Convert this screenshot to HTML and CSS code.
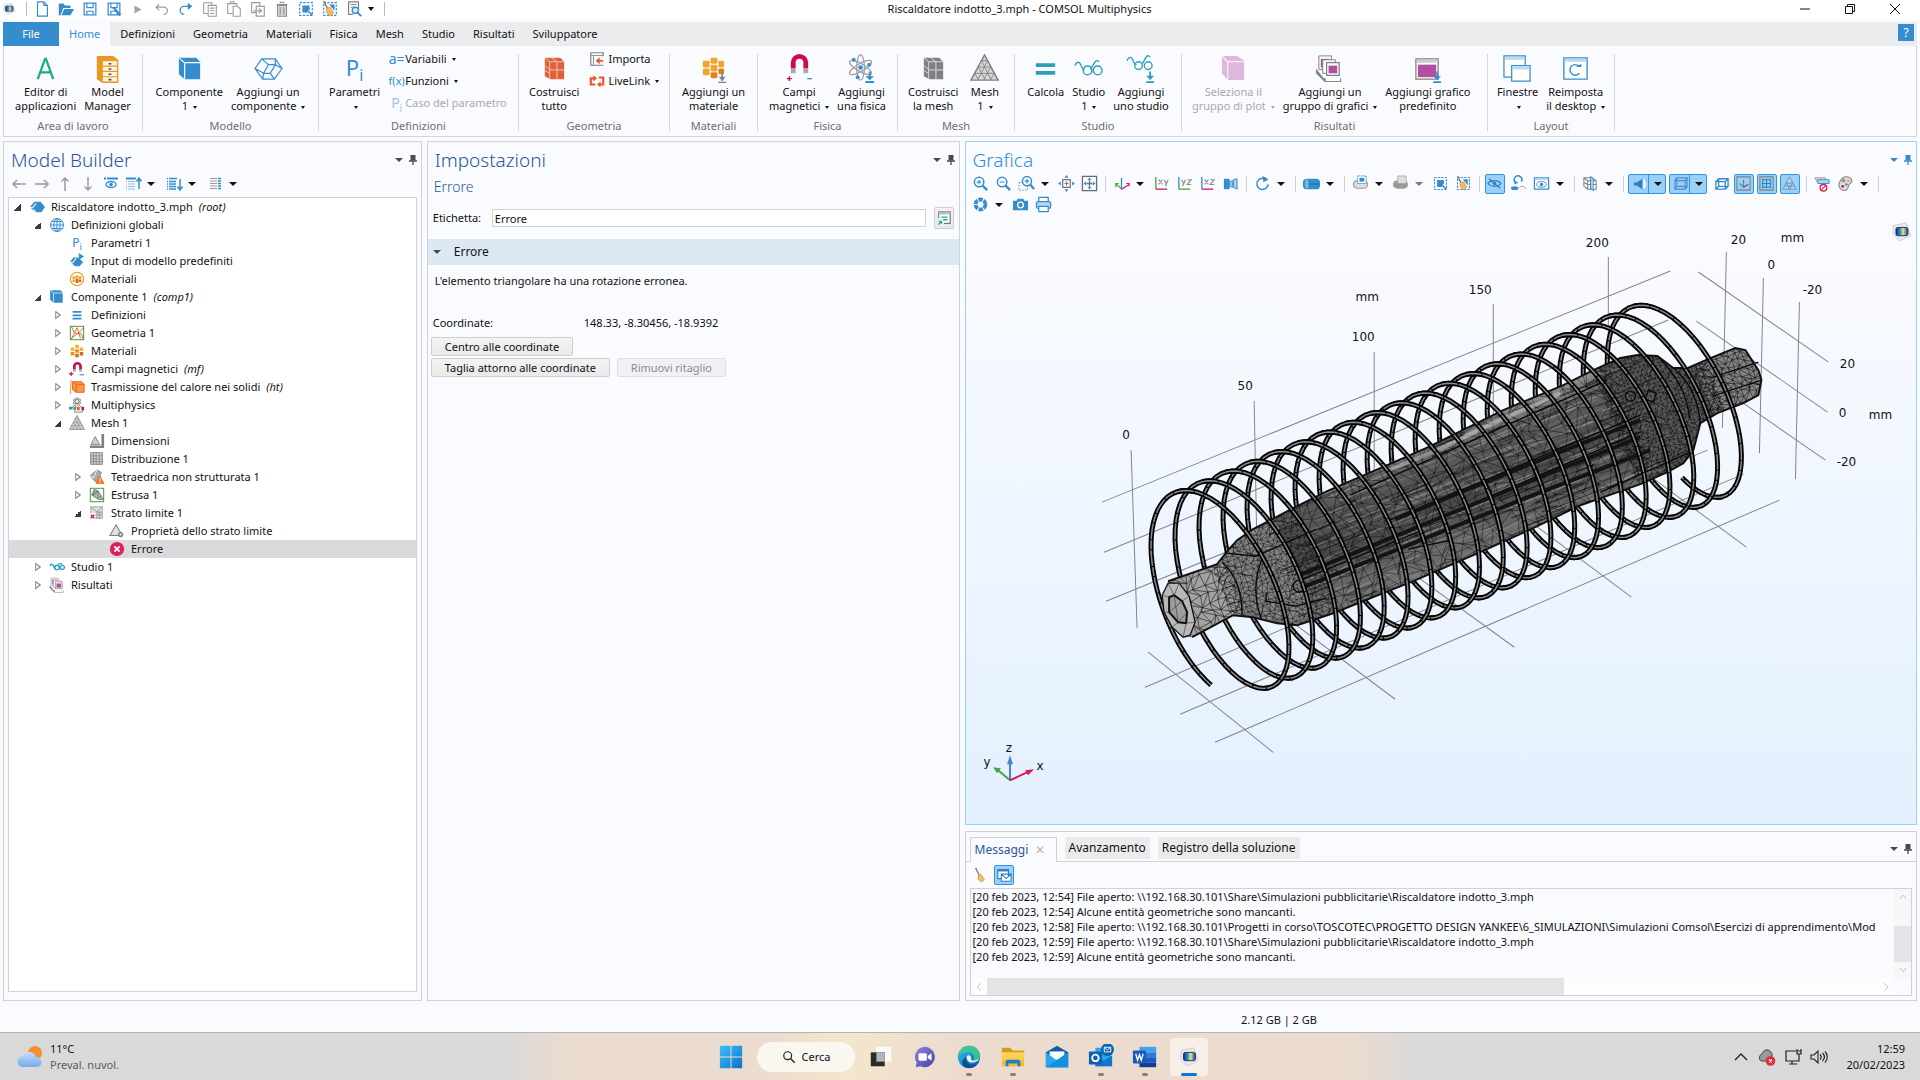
FILE: index.html
```html
<!DOCTYPE html>
<html lang="it">
<head>
<meta charset="utf-8">
<title>Riscaldatore indotto_3.mph - COMSOL Multiphysics</title>
<link rel="stylesheet" href="styles.css">
</head>
<body>
<svg class="defs" aria-hidden="true">
  <defs>
    <linearGradient id="gLogo" x1="0" x2="1"><stop offset="0" stop-color="#0d2f7d"/><stop offset=".35" stop-color="#2f8fd0"/><stop offset=".6" stop-color="#f3e46a"/><stop offset="1" stop-color="#0d3fa8"/></linearGradient>
    <linearGradient id="gEdge" x1="0" y1="0" x2="1" y2="1"><stop offset="0" stop-color="#35c1f1"/><stop offset=".5" stop-color="#1b8fd6"/><stop offset="1" stop-color="#0c59a4"/></linearGradient>
    <linearGradient id="gWin" x1="0" y1="0" x2="1" y2="1"><stop offset="0" stop-color="#3fc0f5"/><stop offset="1" stop-color="#0873cf"/></linearGradient>
    <linearGradient id="gCloud" x1="0" y1="0" x2="0" y2="1"><stop offset="0" stop-color="#c3dcfb"/><stop offset="1" stop-color="#7aa9ec"/></linearGradient>
    <linearGradient id="gChat" x1="0" y1="0" x2="1" y2="1"><stop offset="0" stop-color="#8d86e0"/><stop offset="1" stop-color="#4b3fa8"/></linearGradient>
    <linearGradient id="gFolder" x1="0" y1="0" x2="0" y2="1"><stop offset="0" stop-color="#ffd95e"/><stop offset="1" stop-color="#f5b52a"/></linearGradient>
  </defs>
  <symbol id="logo" viewBox="0 0 24 24"><path d="M3 5l14-3 5 14-12 6-7-7z" fill="#e9e9ec" stroke="#cfcfd4"/><rect x="6" y="7" width="13" height="9" rx="2" fill="url(#gLogo)" stroke="#0e2f80"/></symbol>
  <symbol id="new" viewBox="0 0 20 20"><path d="M5 2h7l4 4v12H5zM12 2v4h4" fill="#fff" stroke="#358dce" stroke-width="1.3"/></symbol>
  <symbol id="open" viewBox="0 0 20 20"><path d="M2 4h5l2 2h6v3H7l-3 8H2z" fill="#358dce"/><path d="M8 10h11l-4 7H5z" fill="#358dce"/></symbol>
  <symbol id="save" viewBox="0 0 20 20"><path d="M3.5 3.5h13v13h-13z" fill="none" stroke="#358dce" stroke-width="1.4"/><path d="M6.500 3.500v5h7v-5M6.500 16.500v-4h7v4" fill="none" stroke="#358dce" stroke-width="1.3"/></symbol>
  <symbol id="play" viewBox="0 0 20 20"><path d="M6 6l8 4.500-8 4.500z" fill="#a5a5a8"/></symbol>
  <symbol id="undo" viewBox="0 0 20 20"><path d="M4 8h8a4 4 0 0 1 0 8M7 4.500L3.500 8 7 11.500" fill="none" stroke="#9b9b9e" stroke-width="1.300"/></symbol>
  <symbol id="redo" viewBox="0 0 20 20"><path d="M15 7H8a4 4 0 0 0 0 9" fill="none" stroke="#358dce" stroke-width="1.400"/><path d="M12 3l5 4-5 4z" fill="#358dce"/></symbol>
  <symbol id="copy" viewBox="0 0 20 20"><path d="M8 15H3V3h9v3M8 6h9v12H8zM10 9h5M10 12h5M10 15h5" fill="none" stroke="#9b9b9e" stroke-width="1.200"/></symbol>
  <symbol id="paste" viewBox="0 0 20 20"><path d="M8 15H3V4h10v3M6 4V2h4v2M9 7h5l3 3v8H9z" fill="none" stroke="#9b9b9e" stroke-width="1.200"/></symbol>
  <symbol id="dup" viewBox="0 0 20 20"><path d="M8 14H3V3h9v4M8 7h9v11H8zM5 12h9M11 9.500l3 2.500-3 2.500" fill="none" stroke="#9b9b9e" stroke-width="1.300"/></symbol>
  <symbol id="trash" viewBox="0 0 20 20"><path d="M5 6h10v12H5z" fill="#d5d5d8"/><path d="M4 5h12M8 4V2.500h4V4M5 6h10v12H5zM8 8v8M12 8v8" fill="none" stroke="#8f8f92" stroke-width="1.200"/></symbol>
  <symbol id="select" viewBox="0 0 20 20"><rect x="3" y="3" width="14" height="14" fill="none" stroke="#358dce" stroke-width="1.300" stroke-dasharray="2.500 1.500"/><path d="M6 6h8v5l-3-1 1 4H6z" fill="#358dce"/><path d="M10 10l7 7M10 10v4M10 10h4" stroke="#358dce" stroke-width="1.800"/></symbol>
  <symbol id="broomsel" viewBox="0 0 20 20"><rect x="3" y="3" width="14" height="14" fill="none" stroke="#358dce" stroke-width="1.300" stroke-dasharray="2.500 1.500"/><path d="M9 5h6v7z" fill="#358dce"/><path d="M3 1l5 10" stroke="#777" stroke-width="1.500"/><path d="M6 9l4-1 4 6-3 4-5-4z" fill="#f3b868" stroke="#d98c2b" stroke-width=".7"/></symbol>
  <symbol id="finddoc" viewBox="0 0 20 20"><path d="M9 16H4V2h11v7" fill="none" stroke="#808083" stroke-width="1.300"/><path d="M6 5h7M6 8h5" stroke="#808083"/><circle cx="11.500" cy="11.500" r="3.500" fill="#dceaf8" stroke="#358dce" stroke-width="1.500"/><path d="M14 14l4 4" stroke="#358dce" stroke-width="2"/></symbol>

  <symbol id="appA" viewBox="0 0 30 30"><path d="M7 26L14.500 5h1L23 26M10 19h10" fill="none" stroke="#1aab8d" stroke-width="2.300"/></symbol>
  <symbol id="cabinet" viewBox="0 0 30 30"><path d="M4 2h17l5 4v24H10L4 26z" fill="#ec971f"/><path d="M9.500 7h16v22h-16zM4 3l5.500 4M9.500 12.500h16M9.500 18h16M9.500 23.500h16" stroke="#ec971f" stroke-width="1.200" fill="#fdf3e4"/><path d="M16 10h3M16 15.500h3M16 21h3M16 26.500h3" stroke="#555" stroke-width="1.600"/></symbol>
  <symbol id="box" viewBox="0 0 30 30"><path d="M4 4h18l4 4v18H10l-6-5z" fill="#358dce"/><path d="M4.500 4.500L10 9v17M10 9h16" fill="none" stroke="#fff" stroke-width="1.200"/></symbol>
  <symbol id="addcomp" viewBox="0 0 30 30"><path d="M8 5h14l7 10-8 11H9L1 15zM8 5l7 6-5 9-9-5M15 11h7l7 4M22 11V5M10 20h7l4 6M10 20l-1 6M17 20l5-9" fill="none" stroke="#358dce" stroke-width="1.200"/></symbol>
  <symbol id="redbox" viewBox="0 0 30 30"><path d="M5 4h16l4 4v18H11l-6-3z" fill="#e0623c"/><path d="M5 4l5 4h15M10 8v18M17.500 8v18M10 16.500h15M5 12l5 4M12 4l5.500 4M5 17l5 3" fill="none" stroke="#f6c3b3" stroke-width="1"/></symbol>
  <symbol id="graybox" viewBox="0 0 30 30"><path d="M5 4h16l4 4v18H11l-6-3z" fill="#808083"/><path d="M5 4l5 4h15M10 8v18M17.500 8v18M10 16.500h15M5 12l5 4M12 4l5.500 4M5 17l5 3" fill="none" stroke="#d9d9db" stroke-width="1"/></symbol>
  <symbol id="mat" viewBox="0 0 30 30"><g fill="#f3a42c"><rect x="4" y="7" width="7" height="7" rx="1.500"/><rect x="12" y="4" width="7" height="6" rx="1.500"/><rect x="20" y="7" width="6" height="7" rx="1.500"/><rect x="4" y="15" width="7" height="7" rx="1.500"/><rect x="12" y="11" width="7" height="7" rx="1.500"/></g><g fill="#dc8417"><rect x="12" y="19" width="7" height="6" rx="1.500"/><rect x="20" y="15" width="6" height="6" rx="1.500"/></g><path d="M24 19v9M20 29.500h8" stroke="#808083" stroke-width="1.600"/><path d="M20.500 23.500h7L24 28z" fill="#808083"/></symbol>
  <symbol id="magnet" viewBox="0 0 30 30"><path d="M8.500 15V9a6.500 6.500 0 0 1 13 0v6" fill="none" stroke="#cf0a4c" stroke-width="5"/><path d="M6 15.500h5V20H6zM19 15.500h5V20h-5z" fill="#aaa"/><path d="M2 25.500h5M4.500 23v5" stroke="#cf0a4c" stroke-width="1.400"/><path d="M23 25.500h5" stroke="#358dce" stroke-width="1.400"/></symbol>
  <symbol id="atom" viewBox="0 0 30 30"><g fill="none" stroke="#a0a0a3" stroke-width="1.300"><ellipse cx="14" cy="14" rx="4" ry="13"/><ellipse cx="14" cy="14" rx="4" ry="13" transform="rotate(60 14 14)"/><ellipse cx="14" cy="14" rx="4" ry="13" transform="rotate(-60 14 14)"/></g><g fill="#358dce"><circle cx="14" cy="14" r="2.400"/><circle cx="7" cy="6" r="2"/><circle cx="23" cy="11" r="2"/><circle cx="11" cy="24" r="2"/><path d="M19 23h9l-4.500 4z"/></g><path d="M23.500 18v8M19 29h9" stroke="#358dce" stroke-width="2"/></symbol>
  <symbol id="tri" viewBox="0 0 30 30"><path d="M15 1l14 26H1z" fill="#d8d8da" stroke="#808083" stroke-width="1.500"/><path d="M12 7h6M8.500 13.500h13M5 20h20M12 7l10 20M8.500 13.500L16 27M5 20l4 7M18 7L8 27M21.500 13.500L14 27M25 20l-4 7" stroke="#808083" fill="none" stroke-width=".9"/></symbol>
  <symbol id="equals" viewBox="0 0 30 30"><path d="M5 9.500h20v4H5zM5 17.500h20v4H5z" fill="#2a9fbf"/></symbol>
  <symbol id="study" viewBox="0 0 30 30"><path d="M1 12c2-5 5-4 6-1s2 5 4 5M17 16l5-8c1-2 3-1 4 0" fill="none" stroke="#2a9fbf" stroke-width="1.500"/><circle cx="14" cy="17" r="4.500" fill="none" stroke="#2a9fbf" stroke-width="1.500"/><circle cx="24.500" cy="17" r="4.500" fill="none" stroke="#2a9fbf" stroke-width="1.500"/></symbol>
  <symbol id="studynode" viewBox="0 0 18 18"><path d="M1 8c1-3 3-3 4 0l2 3" fill="none" stroke="#2a9fbf" stroke-width="1.500"/><circle cx="9" cy="9.500" r="2.500" fill="none" stroke="#2a9fbf" stroke-width="1.500"/><circle cx="15" cy="9.500" r="2.300" fill="none" stroke="#2a9fbf" stroke-width="1.500"/><path d="M10 6c2-1 4-1 5 0" fill="none" stroke="#2a9fbf" stroke-width="1.200"/></symbol>
  <symbol id="addstudy" viewBox="0 0 30 30"><path d="M1 7c2-5 5-4 6-1s2 5 4 5M17 10l4-7c1-2 3-1 4 0" fill="none" stroke="#2a9fbf" stroke-width="1.400"/><circle cx="13" cy="12" r="4" fill="none" stroke="#2a9fbf" stroke-width="1.400"/><circle cx="23" cy="12" r="4" fill="none" stroke="#2a9fbf" stroke-width="1.400"/><path d="M25 18v8M21 29h8" stroke="#2a9fbf" stroke-width="1.800"/><path d="M21 22.500h8L25 27z" fill="#2a9fbf"/></symbol>
  <symbol id="plotgrp" viewBox="0 0 30 30"><path d="M3 2h16l7 5v20H9l-6-7z" fill="#deb8da"/><path d="M3 2l6 6v19M9 8h17" fill="none" stroke="#f9eef8" stroke-width="1.300"/></symbol>
  <symbol id="plots" viewBox="0 0 30 30"><path d="M4 2h13v14H4z" fill="#fff" stroke="#808083"/><path d="M6 5h9v9H6z" fill="#b0509f"/><path d="M8 6h13v14H8z" fill="#fff" stroke="#808083"/><path d="M12 9h13v13H12z" fill="#fff" stroke="#808083" stroke-width="1.300"/><path d="M14 12h9v8h-9z" fill="#b0509f"/><path d="M1 15l8 10h18v4H10L1 20z" fill="#808083"/><path d="M11 24h15v4H11z" fill="#fff"/></symbol>
  <symbol id="addplot" viewBox="0 0 30 30"><path d="M3 5h23v21H3z" fill="#fff" stroke="#808083" stroke-width="1.300"/><path d="M4 6h21v3H4z" fill="#ccc"/><path d="M5 11h19v13H5z" fill="#b0509f"/><path d="M25 18v8M21 29h8" stroke="#358dce" stroke-width="1.800"/><path d="M21 23h8l-4 4z" fill="#358dce"/></symbol>
  <symbol id="wins" viewBox="0 0 30 30"><path d="M1 2h22v22H1z" fill="#fff" stroke="#358dce" stroke-width="1.300"/><path d="M2 3h20v3H2z" fill="#bcd9f2"/><path d="M9 12h19v16H9z" fill="#fff" stroke="#358dce" stroke-width="1.300"/><path d="M10 13h17v3H10z" fill="#bcd9f2"/></symbol>
  <symbol id="resetwin" viewBox="0 0 30 30"><path d="M3 4h24v22H3z" fill="#fff" stroke="#358dce" stroke-width="1.400"/><path d="M4 5h22v3H4z" fill="#bcd9f2"/><path d="M19 20a5.500 5.500 0 1 1 0-7" fill="none" stroke="#358dce" stroke-width="1.500"/><path d="M15 13.500h6V10z" fill="#358dce"/></symbol>
  <symbol id="import" viewBox="0 0 18 18"><path d="M16 16H2V2h14v4" fill="none" stroke="#808083" stroke-width="1.300"/><path d="M2 5h14M5 5v11" stroke="#808083"/><path d="M16 10h-4V7l-4.500 4L12 15v-3h4z" fill="#e8562a"/></symbol>
  <symbol id="livelink" viewBox="0 0 18 18"><path d="M7 13H2V6h4M11 5h5v8h-4" fill="none" stroke="#e8562a" stroke-width="2.400"/><path d="M5 2.500v7L9 6zM13 16V9.500L9 13z" fill="#e8562a"/></symbol>

  <symbol id="comsolnode" viewBox="0 0 18 18"><path d="M6 3h7l5 6-4 6H7L1 9z" fill="#358dce"/><path d="M1 9l3 1 4-5M5 12l3 3" stroke="#fff" fill="none" stroke-width="1.200"/></symbol>
  <symbol id="globe" viewBox="0 0 18 18"><g fill="none" stroke="#358dce" stroke-width="1.100"><circle cx="9" cy="9" r="7.300"/><ellipse cx="9" cy="9" rx="3.600" ry="7.300"/><path d="M9 1.500v15M1.500 9h15M3 5h12M3 13h12"/></g></symbol>
  <symbol id="modelin" viewBox="0 0 18 18"><path d="M5 5h5l6 5-4 5H7L1 10z" fill="#358dce"/><path d="M1 10l3 1 4-5" stroke="#fff" fill="none" stroke-width="1.200"/><path d="M11 0l6 4-6 4z" fill="#1d9fb4"/></symbol>
  <symbol id="matglob" viewBox="0 0 18 18"><circle cx="9" cy="9" r="7.500" fill="#fff" stroke="#ec971f" stroke-width="1.200"/><path d="M4 6h3v3H4zM7.500 5h3v3h-3zM11 6h3v3h-3zM4 9.500h3v3H4z" fill="#f3a42c"/><path d="M7.500 8.500h3v5h-3zM11 9.500h3v3h-3z" fill="#c9701a"/></symbol>
  <symbol id="lines3" viewBox="0 0 18 18"><path d="M4 4.500h10v2H4zM4 8.300h10v2H4zM4 12.100h10v2H4z" fill="#358dce"/></symbol>
  <symbol id="geom" viewBox="0 0 18 18"><rect x="1.500" y="1.500" width="15" height="15" fill="#fff" stroke="#4ba53f" stroke-width="1.200"/><path d="M3 2l3 7 8 1 2 6M3 15l6-12 4 12M16 3l-2 3-12 10" fill="none" stroke="#e8562a"/></symbol>
  <symbol id="mats" viewBox="0 0 18 18"><path d="M2 5h4v4H2zM7 2h4v4H7zM12 5h4v4h-4z" fill="#f9b233"/><path d="M2 10h4v4H2zM7 7h4v4H7z" fill="#ef8a1d"/><path d="M7 12h4v4H7zM12 10h4v4h-4z" fill="#c9701a"/></symbol>
  <symbol id="magnode" viewBox="0 0 18 18"><path d="M6 10V6a3.500 3.500 0 0 1 7 0v4" fill="none" stroke="#cf0a4c" stroke-width="3"/><path d="M4.500 9h3v3h-3zM11.500 9h3v3h-3z" fill="#aaa"/><path d="M0 14.500h5M2.500 12v5" stroke="#cf0a4c" stroke-width="1.300"/><path d="M12 15.500h5" stroke="#358dce" stroke-width="1.300"/></symbol>
  <symbol id="heat" viewBox="0 0 18 18"><path d="M2 1c2 4-2 10 0 16" stroke="#f3a42c" fill="none" stroke-width="1.300"/><path d="M4 3h10l3 3v9H8l-4-3z" fill="#f79d3c" stroke="#e8562a"/><path d="M4 3l4 3v9M8 6h9" fill="none" stroke="#e8562a"/></symbol>
  <symbol id="multi" viewBox="0 0 18 18"><g fill="none" stroke="#8b8b8e"><ellipse cx="9" cy="5" rx="2" ry="4.500"/><ellipse cx="9" cy="5" rx="2" ry="4.500" transform="rotate(60 9 5)"/><ellipse cx="9" cy="5" rx="2" ry="4.500" transform="rotate(-60 9 5)"/></g><path d="M7 9l-5 4M11 9l5 4M8 10l-1 4M6 16v1h9v-2" stroke="#777" fill="none"/><path d="M0 11h4v3H0z" fill="#358dce"/><path d="M5 11h3v4H5z" fill="#4ba53f"/><path d="M9 11h3v4H9z" fill="#e8562a"/><path d="M14 11h3v4h-3z" fill="#cf0a7c"/></symbol>
  <symbol id="dims" viewBox="0 0 18 18"><path d="M7 4l5 9H2z" fill="#ccc" stroke="#808083"/><path d="M1 14h13v3H1zM14 1h3v16h-3z" fill="#808083"/></symbol>
  <symbol id="distr" viewBox="0 0 18 18"><path d="M2 2h13v13H2z" fill="#ddd" stroke="#808083" stroke-width="1.200"/><path d="M5 2v13M8 2v13M11.500 2v13M2 5.500h13M2 9h13M2 12h13" stroke="#808083"/></symbol>
  <symbol id="tetra" viewBox="0 0 18 18"><path d="M9 1l5 3-6 11-7-7z" fill="#a9a9ac" stroke="#808083"/><path d="M1 8l4 2 4-9" stroke="#fff" fill="none"/><path d="M12.500 7l5 10h-10z" fill="#ff6a13"/><path d="M12.500 10.500v3.500M12.500 15v1" stroke="#fff" stroke-width="1.300"/></symbol>
  <symbol id="extr" viewBox="0 0 18 18"><rect x="1.500" y="1.500" width="15" height="15" fill="#fff" stroke="#4ba53f" stroke-width="1.200"/><path d="M6 3l4 1 6 10h-5L3 9z" fill="#bbb" stroke="#777"/><path d="M6 3L5 10l5-5 0 8 4-3M3 9l7-5" stroke="#777" fill="none"/></symbol>
  <symbol id="layer" viewBox="0 0 18 18"><path d="M2 2h13v13H2z" fill="#ddd" stroke="#a0a0a3"/><path d="M2 2l7 6 6-6M9 8v7M9 11h6M12 8v7M9 8h6" stroke="#909093" fill="none"/><path d="M1 9h6v8H1z" fill="#fff"/><path d="M2 11l4 4M6 11l-4 4" stroke="#cf1a4c" stroke-width="1.600"/></symbol>
  <symbol id="prop" viewBox="0 0 18 18"><path d="M8 2l7 12H1z" fill="#e2e2e4" stroke="#808083" stroke-width="1.200"/><circle cx="13" cy="13" r="3" fill="#808083"/><circle cx="13" cy="13" r="1.200" fill="#fff"/></symbol>
  <symbol id="err" viewBox="0 0 18 18"><circle cx="9" cy="9" r="8" fill="#dc1e5a"/><path d="M6 6l6 6M12 6l-6 6" stroke="#fff" stroke-width="2"/></symbol>

  <symbol id="left" viewBox="0 0 18 18"><path d="M16 9H3M7 5L3 9l4 4" fill="none" stroke="#9b9b9e" stroke-width="1.500"/></symbol>
  <symbol id="right" viewBox="0 0 18 18"><path d="M2 9h13M11 5l4 4-4 4" fill="none" stroke="#9b9b9e" stroke-width="1.500"/></symbol>
  <symbol id="up" viewBox="0 0 18 18"><path d="M9 16V3M5.500 6.500L9 3l3.500 3.500" fill="none" stroke="#9b9b9e" stroke-width="1.500"/></symbol>
  <symbol id="down" viewBox="0 0 18 18"><path d="M9 2v13M5.500 11.500L9 15l3.500-3.500" fill="none" stroke="#9b9b9e" stroke-width="1.500"/></symbol>
  <symbol id="show" viewBox="0 0 18 18"><path d="M2 3.500h14" stroke="#358dce" stroke-width="2" stroke-dasharray="2 1 12"/><ellipse cx="9" cy="9.500" rx="5" ry="3" fill="none" stroke="#358dce" stroke-width="1.300"/><circle cx="9" cy="9.500" r="1.800" fill="#358dce"/></symbol>
  <symbol id="collapse" viewBox="0 0 18 18"><path d="M1 3.500h10" stroke="#358dce" stroke-width="2"/><path d="M1 6.500h9M1 9h9M1 11.500h9M1 14h9" stroke="#8db9dd" stroke-dasharray="1 1 12"/><path d="M14 14V4M11.500 6.500L14 3l2.500 3.500" stroke="#358dce" stroke-width="1.500" fill="none"/></symbol>
  <symbol id="expand" viewBox="0 0 18 18"><path d="M1 3.500h10M1 6.500h9M1 9h9M1 11.500h9M1 14h9" stroke="#358dce" stroke-width="1.300" stroke-dasharray="1 1 12"/><path d="M14 4v10M11.500 11.500L14 15l2.500-3.500" stroke="#358dce" stroke-width="1.500" fill="none"/></symbol>
  <symbol id="cols" viewBox="0 0 18 18"><path d="M3 3.500h7M3 6h7M3 8.500h7M3 11h7M3 13.500h7" stroke="#9b9b9e" stroke-width="1.200"/><path d="M11 3.500h3M11 6h3M11 8.500h3M11 11h3M11 13.500h3" stroke="#358dce" stroke-width="1.500"/></symbol>

  <symbol id="zin" viewBox="0 0 18 18"><circle cx="7.500" cy="7.500" r="5" fill="#fff" stroke="#358dce" stroke-width="1.600"/><path d="M11 11l5 5" stroke="#358dce" stroke-width="2.400"/><path d="M5 7.500h5M7.500 5v5" stroke="#358dce" stroke-width="1.200"/></symbol>
  <symbol id="zout" viewBox="0 0 18 18"><circle cx="7.500" cy="7.500" r="5" fill="#fff" stroke="#358dce" stroke-width="1.600"/><path d="M11 11l5 5" stroke="#358dce" stroke-width="2.400"/><path d="M5 7.500h5" stroke="#358dce" stroke-width="1.200"/></symbol>
  <symbol id="zbox" viewBox="0 0 18 18"><path d="M1 8h9v8H1z" fill="none" stroke="#358dce" stroke-dasharray="1.500 1.500"/><circle cx="9.500" cy="6.500" r="4.800" fill="#fff" stroke="#358dce" stroke-width="1.600"/><path d="M13 10l4 5" stroke="#358dce" stroke-width="2.400"/><path d="M7 6.500h5M9.500 4v5" stroke="#358dce" stroke-width="1.200"/></symbol>
  <symbol id="zext" viewBox="0 0 18 18"><path d="M5 5h8v8H5zM7 9h4M9 7v4" fill="none" stroke="#777" stroke-width="1.300"/><path d="M9 0l2 3H7zM9 18l2-3H7zM0 9l3-2v4zM18 9l-3-2v4z" fill="#358dce"/></symbol>
  <symbol id="zsel" viewBox="0 0 18 18"><path d="M1.500 1.500h15v15h-15zM6 9h6M9 6v6" fill="none" stroke="#6e6e71" stroke-width="1.400"/><path d="M9 2.500l2 3H7zM9 15.500l2-3H7zM2.500 9l3-2v4zM15.500 9l-3-2v4z" fill="#358dce"/></symbol>
  <symbol id="axes" viewBox="0 0 18 18"><path d="M9 15V3" stroke="#358dce" stroke-width="1.400"/><path d="M9 15L3 9M3 13V9h3" stroke="#4ba53f" stroke-width="1.300" fill="none"/><path d="M9 15l8-5M14 9h3v3" stroke="#cf1a6c" stroke-width="1.300" fill="none"/></symbol>
  <symbol id="pxy" viewBox="0 0 18 18"><path d="M3 15V2" stroke="#4ba53f" stroke-width="1.400"/><path d="M3 15h12" stroke="#cf1a6c" stroke-width="1.400"/><path d="M6 5l4 5M10 5l-4 5M12 5l2 4M16 5l-3 7" stroke="#8b8b8e" stroke-width="1.200"/></symbol>
  <symbol id="pyz" viewBox="0 0 18 18"><path d="M3 15V2" stroke="#358dce" stroke-width="1.400"/><path d="M3 15h12" stroke="#4ba53f" stroke-width="1.400"/><path d="M6 5l2 4M10 5l-3 7M12 5h4l-4 5h4" fill="none" stroke="#8b8b8e" stroke-width="1.200"/></symbol>
  <symbol id="pxz" viewBox="0 0 18 18"><path d="M3 15V2" stroke="#358dce" stroke-width="1.400"/><path d="M3 15h12" stroke="#cf1a6c" stroke-width="1.400"/><path d="M6 5l4 5M10 5l-4 5M12 5h4l-4 5h4" fill="none" stroke="#8b8b8e" stroke-width="1.200"/></symbol>
  <symbol id="projc" viewBox="0 0 18 18"><path d="M2 4h6v11H2z" fill="#358dce"/><path d="M8 7l3-1v7l-3-1zM12 5l4-1v11l-4-2z" fill="#a9cdec" stroke="#358dce"/></symbol>
  <symbol id="rot" viewBox="0 0 18 18"><path d="M14 6A6 6 0 1 0 15 10" fill="none" stroke="#358dce" stroke-width="1.600"/><path d="M9 1l6 3-5 4z" fill="#358dce"/></symbol>
  <symbol id="cyl" viewBox="0 0 18 18"><path d="M3 4h12a3 5 0 0 1 0 11H3A3 5 0 0 1 3 4z" fill="#358dce"/><ellipse cx="4" cy="9.500" rx="2" ry="5" fill="#7cb6e3"/><path d="M6 9.500h11" stroke="#1c6aab"/></symbol>
  <symbol id="selobj" viewBox="0 0 18 18"><rect x="1.500" y="6" width="15" height="8" rx="4" fill="#ddd" stroke="#9b9b9e" stroke-width="1.200"/><path d="M6 1h9v8H6z" fill="#fff" stroke="#358dce" stroke-dasharray="2 1"/><path d="M8 3h5v4H8z" fill="#358dce"/></symbol>
  <symbol id="selobj2" viewBox="0 0 18 18"><rect x="1.500" y="6" width="15" height="8" rx="4" fill="#999" stroke="#9b9b9e"/><path d="M6 1h9v8H6z" fill="#ddd" stroke="#9b9b9e" stroke-dasharray="2 1"/></symbol>
  <symbol id="hide" viewBox="0 0 18 18"><path d="M2 9c3-4 11-4 14 0-3 4-11 4-14 0z" fill="none" stroke="#2f80bd" stroke-width="1.200"/><circle cx="9" cy="9" r="1.800" fill="#2f80bd"/><path d="M3 4l12 10" stroke="#2f80bd" stroke-width="1.300"/></symbol>
  <symbol id="resethide" viewBox="0 0 18 18"><path d="M6 8a4 4 0 1 1 6-1" fill="none" stroke="#358dce" stroke-width="1.600"/><path d="M4 6l1 4 4-2z" fill="#358dce"/><ellipse cx="5" cy="14" rx="4" ry="2" fill="#358dce"/><path d="M10 13c2-2 6-1 7 2" stroke="#9b9b9e" fill="none"/></symbol>
  <symbol id="view" viewBox="0 0 18 18"><path d="M1.500 3h15v12h-15z" fill="#fff" stroke="#358dce" stroke-width="1.300"/><path d="M2 4.500h14" stroke="#bcd9f2" stroke-width="2"/><ellipse cx="9" cy="10" rx="5" ry="3" fill="none" stroke="#358dce"/><circle cx="9" cy="10" r="1.800" fill="#358dce"/></symbol>
  <symbol id="clip" viewBox="0 0 18 18"><path d="M2 3h9l4 3v9H6l-4-3zM2 3l4 3h9M6 6v9M2 8l4 2h9M9 3v12" fill="none" stroke="#808083" stroke-width="1.100"/><path d="M9 1l3 4v12l-3-4z" fill="#a9cdec" stroke="#358dce" opacity=".8"/></symbol>
  <symbol id="light" viewBox="0 0 18 18"><path d="M2 8h3l6-4v11L5 11H2z" fill="#2f80bd"/><path d="M12 5a7 7 0 0 1 0 9" fill="#eef6fd" stroke="#fff" stroke-width="2"/></symbol>
  <symbol id="wirebox" viewBox="0 0 18 18"><path d="M4 3h11v9H4zM2 6h11v9H2zM2 6l2-3M13 6l2-3M13 15l2-3M2 15l2-3" fill="none" stroke="#4a8cc7" stroke-width="1.200"/></symbol>
  <symbol id="wirebox2" viewBox="0 0 18 18"><path d="M6 4h10v8H6zM3 7h10v8H3zM3 7l3-3M13 7l3-3M13 15l3-3M3 15l3-3" fill="none" stroke="#358dce" stroke-width="1.400"/></symbol>
  <symbol id="axesbox" viewBox="0 0 18 18"><path d="M2 2h14v14H2z" fill="none" stroke="#808083" stroke-width="1.200"/><path d="M9 13V5" stroke="#358dce" stroke-width="1.300"/><path d="M9 13L5 9" stroke="#4ba53f" stroke-width="1.300"/><path d="M9 13l5-3" stroke="#cf1a6c" stroke-width="1.300"/></symbol>
  <symbol id="gridbox" viewBox="0 0 18 18"><path d="M2 2h14v14H2z" fill="none" stroke="#808083" stroke-width="1.200"/><path d="M4 5h10M4 9h10M4 13h10M5 4v10M9 4v10M13 4v10" stroke="#2f80bd" stroke-width="1.200"/></symbol>
  <symbol id="meshbtn" viewBox="0 0 18 18"><path d="M9 2l7 13H2zM5.500 8.500h7M9 2v0M5.500 8.500L9 15l3.500-6.500M3.800 11.800h10.400" fill="#b9dcf8" stroke="#6f8fb0"/></symbol>
  <symbol id="nohl" viewBox="0 0 18 18"><path d="M1 3h11v4H3z" fill="#ddd" stroke="#9b9b9e"/><path d="M4 5h12v4H4z" fill="#a9d7f0" stroke="#358dce"/><circle cx="10" cy="13.500" r="3.500" fill="#fff" stroke="#dc1e5a" stroke-width="1.500"/><path d="M8 15.500l4-4" stroke="#dc1e5a" stroke-width="1.300"/></symbol>
  <symbol id="palette" viewBox="0 0 18 18"><path d="M9 2c5-1 8 3 6 6-1 2-3 1-3 4s-2 5-6 4-5-6-3-9 3-5 6-5z" fill="#ddd" stroke="#8b8b8e" stroke-width="1.200"/><circle cx="7" cy="6" r="2" fill="#999"/><circle cx="12" cy="6" r="1.300" fill="#f3a42c"/><circle cx="6" cy="12" r="1.500" fill="#cf1a4c"/><circle cx="10" cy="10" r="1.300" fill="#358dce"/></symbol>
  <symbol id="aperture" viewBox="0 0 18 18"><circle cx="9" cy="9" r="5.300" fill="none" stroke="#358dce" stroke-width="4" stroke-dasharray="4.500 1.050"/></symbol>
  <symbol id="camera" viewBox="0 0 18 18"><path d="M1 5h4l1-2h6l1 2h4v10H1z" fill="#358dce"/><circle cx="9" cy="9.500" r="3" fill="none" stroke="#fff" stroke-width="1.400"/></symbol>
  <symbol id="printer" viewBox="0 0 18 18"><path d="M4 1.500h10V7H4z" fill="#fff" stroke="#358dce" stroke-width="1.300"/><rect x="1.500" y="6" width="15" height="7" rx="2" fill="#b9d3ec" stroke="#358dce" stroke-width="1.300"/><path d="M4 11h10v5.500H4z" fill="#fff" stroke="#358dce" stroke-width="1.300"/></symbol>
  <symbol id="pin" viewBox="0 0 12 12"><path d="M3.500 1h5v5.500h-5z" fill="currentColor"/><path d="M2 7h8M6 7v4" stroke="currentColor" stroke-width="1.300"/></symbol>
  <symbol id="goto" viewBox="0 0 18 18"><path d="M3 9V2h13v13H9" fill="#fff" stroke="#777" stroke-width="1.300"/><path d="M3 3.500h13" stroke="#bbb" stroke-width="3"/><path d="M6 8h7M8 11h5" stroke="#1aab8d" stroke-width="1.500"/><path d="M2 12h5v4L5.500 14.500 3 17l-1-1 2.500-2.500z" fill="#1aab8d"/></symbol>
  <symbol id="broom" viewBox="0 0 18 18"><path d="M4 1l5 10" stroke="#777" stroke-width="1.400"/><path d="M7 9l3-1 4 6-3 3-4-3z" fill="#f3b868" stroke="#d98c2b" stroke-width=".7"/></symbol>
  <symbol id="msgs" viewBox="0 0 18 18"><path d="M2 3h12v10H2z" fill="#fff" stroke="#2f80bd" stroke-width="1.300"/><path d="M2 4h12" stroke="#2f80bd" stroke-width="2"/><path d="M6 8h11v8H6zM6 8l5.500 5L17 8" fill="#fff" stroke="#2f80bd" stroke-width="1.200"/></symbol>

  <symbol id="weather" viewBox="0 0 30 30"><circle cx="20" cy="11" r="7" fill="#f4902c"/><path d="M8 25a5.500 5.500 0 0 1 0-11 7 7 0 0 1 13 1 5 5 0 0 1 1 10z" fill="url(#gCloud)"/></symbol>
  <symbol id="win" viewBox="0 0 28 28"><path d="M2 2h11.500v11.500H2zM14.500 2H26v11.500H14.500zM2 14.500h11.500V26H2zM14.500 14.500H26V26H14.500z" fill="url(#gWin)"/></symbol>
  <symbol id="taskview" viewBox="0 0 28 28"><path d="M9 3h16v16H9z" fill="#fafafa"/><path d="M3 9h15v15H3z" fill="#2b2b2b"/><path d="M9 9h9v10H9z" fill="#b5b5b5"/></symbol>
  <symbol id="chat" viewBox="0 0 28 28"><path d="M14 3a11 11 0 1 1-5 21l-5 1 1-5A11 11 0 0 1 14 3z" fill="url(#gChat)"/><rect x="7" y="10" width="9" height="8" rx="1.500" fill="#fff"/><path d="M17 13l4-3v8l-4-3z" fill="#fff"/></symbol>
  <symbol id="edge" viewBox="0 0 28 28"><circle cx="14" cy="14" r="12" fill="url(#gEdge)"/><path d="M14 2c8 0 12 6 12 11 0 4-4 6-8 5 3-2 2-8-4-9S3 11 2 14C2 8 7 2 14 2z" fill="#43c98b" opacity=".85"/><path d="M11 14c-1 6 4 10 12 7-3 5-9 6-13 4s-5-8 1-11z" fill="#0c4f94"/><path d="M13 12c3 0 4 3 3 5 2 2 6 1 9-1-2 4-8 5-11 3-3-3-3-6-1-7z" fill="#eef6fb"/></symbol>
  <symbol id="folder" viewBox="0 0 28 28"><path d="M2 4h9l3 3h12v7H2z" fill="#d99b17"/><path d="M2 9h24v15H2z" fill="url(#gFolder)"/><path d="M6 24v-4a3 3 0 0 1 3-3h10a3 3 0 0 1 3 3v4h-3v-3H9v3z" fill="#1c80cf"/></symbol>
  <symbol id="mail" viewBox="0 0 28 28"><path d="M2 9l12-7 12 7v16H2z" fill="#0f5ea8"/><path d="M6 8h16v9H6z" fill="#f5fafd"/><path d="M2 9l12 9L26 9v16H2z" fill="#28a8ea"/><path d="M2 25l14-9L26 9v16z" fill="#1490df"/></symbol>
  <symbol id="outlook" viewBox="0 0 28 28"><path d="M8 4h16v20H8z" fill="#28a8ea"/><path d="M8 12l9 6 9-6v12H8z" fill="#1374c9"/><rect x="1" y="8" width="14" height="14" rx="1" fill="#0f5db5"/><circle cx="8" cy="15" r="3.500" fill="none" stroke="#fff" stroke-width="2"/><circle cx="21" cy="6" r="7" fill="#0b63b5"/><path d="M17.500 3.500h7v5h-7zM17.500 3.500L21 6.500l3.500-3" fill="none" stroke="#fff"/></symbol>
  <symbol id="word" viewBox="0 0 28 28"><path d="M8 3h18v6H8z" fill="#41a5ee"/><path d="M8 9h18v6H8z" fill="#2b7cd3"/><path d="M8 15h18v5H8z" fill="#185abd"/><path d="M8 20h18v5H8z" fill="#103f91"/><rect x="1" y="7" width="14" height="14" rx="1" fill="#185abd"/><path d="M4 10.500l2 7 2-6 2 6 2-7" fill="none" stroke="#fff" stroke-width="1.400"/></symbol>
  <symbol id="chev" viewBox="0 0 18 18"><path d="M3 12l6-6 6 6" fill="none" stroke="#222" stroke-width="1.400"/></symbol>
  <symbol id="cloudx" viewBox="0 0 18 18"><path d="M3 13a4 4 0 0 1 1-7 5 5 0 0 1 10 2l-2 5z" fill="#999" stroke="#444"/><circle cx="12.500" cy="13" r="4.800" fill="#d92f3a"/><path d="M11 11.500l3 3M14 11.500l-3 3" stroke="#fff" stroke-width="1.200"/></symbol>
  <symbol id="net" viewBox="0 0 18 18"><path d="M12 3H2v10h13v-3M5 16h8M8 13v3M15 10V6M13 3h4v3h-4zM13 1v2M17 1v2" fill="none" stroke="#222" stroke-width="1.200"/></symbol>
  <symbol id="spk" viewBox="0 0 18 18"><path d="M1 7h3l4-4v12l-4-4H1zM10 6.500c1.500 1.500 1.500 3.500 0 5M12.500 5c2.500 2.500 2.500 5.500 0 8M15 3.500c3 3 3 8 0 11" fill="none" stroke="#222" stroke-width="1.100"/></symbol>
</svg>

<header class="titlebar">
  <div class="quick">
    <svg class="applogo"><use href="#logo"/></svg>
    <span class="qsep"></span>
    <button aria-label="Nuovo"><svg><use href="#new"/></svg></button>
    <button aria-label="Apri"><svg><use href="#open"/></svg></button>
    <button aria-label="Salva"><svg><use href="#save"/></svg></button>
    <button aria-label="Salva con nome"><svg viewBox="0 0 20 20"><use href="#save"/><path d="M9 8l8 9" stroke="#358dce" stroke-width="2.500"/></svg></button>
    <button aria-label="Esegui"><svg><use href="#play"/></svg></button>
    <button aria-label="Annulla"><svg><use href="#undo"/></svg></button>
    <button aria-label="Ripeti"><svg><use href="#redo"/></svg></button>
    <button aria-label="Copia"><svg><use href="#copy"/></svg></button>
    <button aria-label="Incolla"><svg><use href="#paste"/></svg></button>
    <button aria-label="Duplica"><svg><use href="#dup"/></svg></button>
    <button aria-label="Elimina"><svg><use href="#trash"/></svg></button>
    <button aria-label="Seleziona"><svg><use href="#select"/></svg></button>
    <button aria-label="Deseleziona"><svg><use href="#broomsel"/></svg></button>
    <button aria-label="Trova"><svg><use href="#finddoc"/></svg></button>
    <span class="caret"></span>
    <span class="qsep"></span>
  </div>
  <h1>Riscaldatore indotto_3.mph - COMSOL Multiphysics</h1>
  <div class="wincontrols">
    <button aria-label="Riduci"><svg viewBox="0 0 12 12"><path d="M1 6h10" stroke="#111"/></svg></button>
    <button aria-label="Ripristina"><svg viewBox="0 0 12 12"><path d="M1.500 3.500h7v7h-7zM3.500 3V1.500h7v7H9" fill="none" stroke="#111"/></svg></button>
    <button aria-label="Chiudi"><svg viewBox="0 0 12 12"><path d="M1 1l10 10M11 1L1 11" stroke="#111"/></svg></button>
  </div>
</header>

<nav class="tabs">
  <button class="file">File</button><button class="on">Home</button><button>Definizioni</button><button>Geometria</button><button>Materiali</button><button>Fisica</button><button>Mesh</button><button>Studio</button><button>Risultati</button><button>Sviluppatore</button>
  <button class="help">?</button>
</nav>

<section class="ribbon">
  <div class="group g-area"><div class="cmds">
    <button class="big"><svg><use href="#appA"/></svg><span>Editor di<br>applicazioni</span></button>
    <button class="big"><svg><use href="#cabinet"/></svg><span>Model<br>Manager</span></button></div><h2>Area di lavoro</h2></div>
  <div class="group g-model"><div class="cmds">
    <button class="big"><svg><use href="#box"/></svg><span>Componente<br>1 <i class="caret"></i></span></button>
    <button class="big"><svg><use href="#addcomp"/></svg><span>Aggiungi un<br>componente <i class="caret"></i></span></button></div><h2>Modello</h2></div>
  <div class="group g-def"><div class="cmds start">
    <button class="big"><b class="pi">P<sub>i</sub></b><span>Parametri<br><i class="caret"></i></span></button>
    <div class="small"><button><b class="gl">a=</b>Variabili <i class="caret"></i></button><button><b class="gl fx">f(x)</b>Funzioni <i class="caret"></i></button><button disabled><b class="gl">P<sub>i</sub></b>Caso del parametro</button></div></div><h2>Definizioni</h2></div>
  <div class="group g-geom"><div class="cmds start">
    <button class="big"><svg><use href="#redbox"/></svg><span>Costruisci<br>tutto</span></button>
    <div class="small"><button><svg><use href="#import"/></svg>Importa</button><button><svg><use href="#livelink"/></svg>LiveLink <i class="caret"></i></button></div></div><h2>Geometria</h2></div>
  <div class="group g-mat"><div class="cmds">
    <button class="big"><svg><use href="#mat"/></svg><span>Aggiungi un<br>materiale</span></button></div><h2>Materiali</h2></div>
  <div class="group g-phys"><div class="cmds">
    <button class="big"><svg><use href="#magnet"/></svg><span>Campi<br>magnetici <i class="caret"></i></span></button>
    <button class="big"><svg><use href="#atom"/></svg><span>Aggiungi<br>una fisica</span></button></div><h2>Fisica</h2></div>
  <div class="group g-mesh"><div class="cmds start">
    <button class="big"><svg><use href="#graybox"/></svg><span>Costruisci<br>la mesh</span></button>
    <button class="big"><svg><use href="#tri"/></svg><span>Mesh<br>1 <i class="caret"></i></span></button></div><h2>Mesh</h2></div>
  <div class="group g-study"><div class="cmds">
    <button class="big"><svg><use href="#equals"/></svg><span>Calcola</span></button>
    <button class="big"><svg><use href="#study"/></svg><span>Studio<br>1 <i class="caret"></i></span></button>
    <button class="big"><svg><use href="#addstudy"/></svg><span>Aggiungi<br>uno studio</span></button></div><h2>Studio</h2></div>
  <div class="group g-res"><div class="cmds start">
    <button class="big" disabled><svg><use href="#plotgrp"/></svg><span>Seleziona il<br>gruppo di plot <i class="caret"></i></span></button>
    <button class="big"><svg><use href="#plots"/></svg><span>Aggiungi un<br>gruppo di grafici <i class="caret"></i></span></button>
    <button class="big"><svg><use href="#addplot"/></svg><span>Aggiungi grafico<br>predefinito</span></button></div><h2>Risultati</h2></div>
  <div class="group g-lay"><div class="cmds">
    <button class="big"><svg><use href="#wins"/></svg><span>Finestre<br><i class="caret"></i></span></button>
    <button class="big"><svg><use href="#resetwin"/></svg><span>Reimposta<br>il desktop <i class="caret"></i></span></button></div><h2>Layout</h2></div>
</section>

<main class="work">
  <section class="panel builder">
    <div class="head"><h2>Model Builder</h2><span class="tools"><i class="caret wide"></i><svg><use href="#pin"/></svg></span></div>
    <div class="treebar">
      <button aria-label="Indietro"><svg><use href="#left"/></svg></button><button aria-label="Avanti"><svg><use href="#right"/></svg></button><button aria-label="Su"><svg><use href="#up"/></svg></button><button aria-label="Giù"><svg><use href="#down"/></svg></button><button aria-label="Mostra"><svg><use href="#show"/></svg></button><button class="dd" aria-label="Comprimi"><svg><use href="#collapse"/></svg><i class="caret wide"></i></button><button class="dd" aria-label="Espandi"><svg><use href="#expand"/></svg><i class="caret wide"></i></button><button class="dd" aria-label="Colonne"><svg><use href="#cols"/></svg><i class="caret wide"></i></button>
    </div>
    <ul class="tree">
      <li class="l0 openn"><svg><use href="#comsolnode"/></svg>Riscaldatore indotto_3.mph <em>(root)</em></li>
      <li class="l1 openn"><svg><use href="#globe"/></svg>Definizioni globali</li>
      <li class="l2"><b class="tpi">P<sub>i</sub></b>Parametri 1</li>
      <li class="l2"><svg><use href="#modelin"/></svg>Input di modello predefiniti</li>
      <li class="l2"><svg><use href="#matglob"/></svg>Materiali</li>
      <li class="l1 openn"><svg viewBox="2 2 28 28"><use href="#box" width="30" height="30"/></svg>Componente 1 <em>(comp1)</em></li>
      <li class="l2 shut"><svg><use href="#lines3"/></svg>Definizioni</li>
      <li class="l2 shut"><svg><use href="#geom"/></svg>Geometria 1</li>
      <li class="l2 shut"><svg><use href="#mats"/></svg>Materiali</li>
      <li class="l2 shut"><svg><use href="#magnode"/></svg>Campi magnetici <em>(mf)</em></li>
      <li class="l2 shut"><svg><use href="#heat"/></svg>Trasmissione del calore nei solidi <em>(ht)</em></li>
      <li class="l2 shut"><svg><use href="#multi"/></svg>Multiphysics</li>
      <li class="l2 openn"><svg><use href="#tri"/></svg>Mesh 1</li>
      <li class="l3"><svg><use href="#dims"/></svg>Dimensioni</li>
      <li class="l3"><svg><use href="#distr"/></svg>Distribuzione 1</li>
      <li class="l3 shut"><svg><use href="#tetra"/></svg>Tetraedrica non strutturata 1</li>
      <li class="l3 shut"><svg><use href="#extr"/></svg>Estrusa 1</li>
      <li class="l3 openn"><svg><use href="#layer"/></svg>Strato limite 1</li>
      <li class="l4"><svg><use href="#prop"/></svg>Proprietà dello strato limite</li>
      <li class="l4 sel"><svg><use href="#err"/></svg>Errore</li>
      <li class="l1 shut"><svg><use href="#studynode"/></svg>Studio 1</li>
      <li class="l1 shut"><svg><use href="#plots"/></svg>Risultati</li>
    </ul>
  </section>

  <section class="panel settings">
    <div class="head"><h2>Impostazioni</h2><span class="tools"><i class="caret wide"></i><svg><use href="#pin"/></svg></span></div>
    <h3>Errore</h3>
    <div class="field"><label for="tag">Etichetta:</label><input id="tag" type="text" value="Errore"><button class="btn goto" aria-label="Vai alla sorgente"><svg><use href="#goto"/></svg></button></div>
    <h4 class="sect"><i class="caret wide"></i>Errore</h4>
    <div class="info">
      <p>L'elemento triangolare ha una rotazione erronea.</p>
      <dl><dt>Coordinate:</dt><dd>148.33, -8.30456, -18.9392</dd></dl>
      <div class="btns"><button class="btn">Centro alle coordinate</button></div>
      <div class="btns"><button class="btn">Taglia attorno alle coordinate</button><button class="btn" disabled>Rimuovi ritaglio</button></div>
    </div>
  </section>

  <div class="rightcol">
    <section class="panel graphics">
      <div class="head"><h2>Grafica</h2><span class="tools"><i class="caret wide"></i><svg><use href="#pin"/></svg></span></div>
      <div class="gbar">
        <button aria-label="Ingrandisci"><svg><use href="#zin"/></svg></button><button aria-label="Riduci"><svg><use href="#zout"/></svg></button><button aria-label="Zoom riquadro"><svg><use href="#zbox"/></svg></button><i class="dda"></i><button aria-label="Estensione"><svg><use href="#zext"/></svg></button><button aria-label="Zoom selezione"><svg><use href="#zsel"/></svg></button><i class="gsep"></i>
        <button aria-label="Vista"><svg><use href="#axes"/></svg></button><i class="dda"></i><button aria-label="Piano xy"><svg><use href="#pxy"/></svg></button><button aria-label="Piano yz"><svg><use href="#pyz"/></svg></button><button aria-label="Piano xz"><svg><use href="#pxz"/></svg></button><button aria-label="Proiezione"><svg><use href="#projc"/></svg></button><i class="gsep"></i>
        <button aria-label="Ruota"><svg><use href="#rot"/></svg></button><i class="dda"></i><i class="gsep"></i>
        <button aria-label="Entità"><svg><use href="#cyl"/></svg></button><i class="dda"></i><i class="gsep"></i>
        <button aria-label="Seleziona oggetti"><svg><use href="#selobj"/></svg></button><i class="dda"></i><button aria-label="Deseleziona oggetti"><svg><use href="#selobj2"/></svg></button><i class="dda dim"></i><button aria-label="Selezione"><svg><use href="#select"/></svg></button><button aria-label="Pulisci selezione"><svg><use href="#broomsel"/></svg></button><i class="gsep"></i>
        <button class="act" aria-label="Nascondi"><svg><use href="#hide"/></svg></button><button aria-label="Reimposta"><svg><use href="#resethide"/></svg></button><button aria-label="Visualizza"><svg><use href="#view"/></svg></button><i class="dda"></i><i class="gsep"></i>
        <button aria-label="Ritaglio"><svg><use href="#clip"/></svg></button><i class="dda"></i><i class="gsep"></i>
        <button class="act combo" aria-label="Luce"><svg><use href="#light"/></svg><i class="caret wide"></i></button><button class="act combo" aria-label="Trasparenza"><svg><use href="#wirebox"/></svg><i class="caret wide"></i></button><button aria-label="Wireframe"><svg><use href="#wirebox2"/></svg></button><button class="act" aria-label="Assi"><svg><use href="#axesbox"/></svg></button><button class="act" aria-label="Griglia"><svg><use href="#gridbox"/></svg></button><button class="act" aria-label="Mesh"><svg><use href="#meshbtn"/></svg></button><i class="gsep"></i>
        <button aria-label="Evidenziazione"><svg><use href="#nohl"/></svg></button><button aria-label="Colori"><svg><use href="#palette"/></svg></button><i class="dda"></i><i class="gsep"></i>
      </div>
      <div class="gbar second"><button aria-label="Istantanea"><svg><use href="#aperture"/></svg></button><i class="dda"></i><button aria-label="Foto"><svg><use href="#camera"/></svg></button><button aria-label="Stampa"><svg><use href="#printer"/></svg></button></div>
      <svg class="scene" viewBox="966 215 950 606" role="img" aria-label="Mesh del riscaldatore">
        <defs>
          <linearGradient id="body" gradientUnits="userSpaceOnUse" x1="1420" y1="430" x2="1467" y2="560"><stop offset="0" stop-color="#9a9a9a"/><stop offset=".25" stop-color="#5a5a5a"/><stop offset=".6" stop-color="#484848"/><stop offset="1" stop-color="#777"/></linearGradient>
          <clipPath id="bodyClip"><path d="M1168 581L1217 564 1228 550 1237 540 1253 529 1293 508 1327 491 1387 465 1428 447 1503 410 1563 385 1593 370 1620 358 1637 355 1657 356 1673 368 1687 368 1710 358 1735 348 1745 350 1758 370 1761 380 1758 395 1743 403 1717 413 1700 423 1693 450 1683 463 1667 472 1640 484 1578 506 1535 527 1480 552 1413 581 1360 602 1333 613 1297 625 1277 623 1253 617 1233 615 1192 637 1182 637z"/></clipPath>
        </defs>
        <g class="grid">
          <path d="M1131 450L1137 628M1254 401L1257 560M1374 352V480M1493 304V430M1608 257V400M1726 252L1722 428M1763 278L1759 453M1799 302L1795 479"/>
          <path d="M1102 502L1670 271M1104 552L1668 320M1106 601L1666 372M1145 687L1707 450M1180 714L1743 474M1215 742L1779 500"/>
          <path d="M1148 652L1273 752M1272 607L1395 699M1394 560L1514 647M1512 508L1631 597M1628 460L1746 547M1698 272L1828 362M1696 321L1827 412M1695 370L1825 460"/>
        </g>
        <g id="coilBack"></g>
        <g clip-path="url(#bodyClip)" id="bodyMesh"></g>
        <path class="edge" d="M1168 581L1217 564 1228 550 1237 540 1253 529 1293 508 1327 491 1387 465 1428 447 1503 410 1563 385 1593 370 1620 358 1637 355 1657 356 1673 368 1687 368 1710 358 1735 348 1745 350 1758 370 1761 380 1758 395 1743 403 1717 413 1700 423 1693 450 1683 463 1667 472 1640 484 1578 506 1535 527 1480 552 1413 581 1360 602 1333 613 1297 625 1277 623 1253 617 1233 615 1192 637"/>
        <g class="features">
          <path d="M1222 562q20 18 20 52M1262 558q-12 30-1 60M1673 368q24 20 27 56M1657 356q30 30 32 62"/>
          <path d="M1226 553l30 3 60-27M1266 593v8l30 5 30-8M1350 495L1607 380M1387 521L1640 415M1350 556L1640 432M1408 549l43-9M1300 580L1420 531M1710 378l48-16M1712 396l49-16M1600 492l90-40M1648 390l8 3-3 9-8-3z"/>
          <path class="thick" d="M1297 576L1520 485 1640 437M1301 588L1520 500 1650 450M1395 519L1520 468 1640 420"/>
          <circle cx="1299" cy="586" r="6"/><circle cx="1630" cy="396" r="5"/>
        </g>
        <path class="shine" d="M1388 470L1440 449 1480 429 1560 393"/>
        <g class="face"><path d="M1162 595L1168 583 1179 583 1189 596 1195 622 1190 635 1183 637 1172 627 1164 612z"/><path class="in" d="M1169 597L1174 595 1182 601 1187 612 1186 623 1178 622 1169 612z"/><path class="fl" d="M1168 583L1174 595 1179 583M1189 596L1182 601M1195 622L1186 623 1183 637M1172 627L1178 622M1162 595L1169 597M1164 612L1169 612M1174 595L1178 622 1187 612M1169 612L1182 601"/></g>
        <g id="coilFront"></g>
        <g class="labels">
          <text x="1126" y="439">0</text><text x="1245" y="390">50</text><text x="1363" y="341">100</text><text x="1367" y="301">mm</text><text x="1480" y="294">150</text><text x="1597" y="247">200</text><text x="1738" y="244">20</text><text x="1792" y="242">mm</text><text x="1771" y="269">0</text><text x="1812" y="294">-20</text><text x="1847" y="368">20</text><text x="1842" y="417">0</text><text x="1880" y="419">mm</text><text x="1846" y="466">-20</text>
          <text x="1009" y="752">z</text><text x="987" y="766">y</text><text x="1040" y="770">x</text>
        </g>
        <g class="triad"><path d="M1010 780V762" stroke="#4a86c5"/><path d="M1007 764l3-9 3 9z" fill="#4a86c5"/><path d="M1010 780l-12-10" stroke="#4ba53f"/><path d="M993 767l8 1-4 5z" fill="#4ba53f"/><path d="M1010 780l17-8" stroke="#cf1a5c"/><path d="M1034 769l-6 6-3-5z" fill="#cf1a5c"/></g>
        <svg x="1890" y="221" width="22" height="22"><use href="#logo"/></svg>
      </svg>
    </section>

    <section class="panel messages">
      <div class="mtabs"><button class="on">Messaggi <span class="x">✕</span></button><button>Avanzamento</button><button>Registro della soluzione</button><span class="tools"><i class="caret wide"></i><svg><use href="#pin"/></svg></span></div>
      <div class="mbar"><button aria-label="Pulisci"><svg><use href="#broom"/></svg></button><button class="act" aria-label="Messaggi"><svg><use href="#msgs"/></svg></button></div>
      <div class="log">
        <ol>
          <li>[20 feb 2023, 12:54] File aperto: \\192.168.30.101\Share\Simulazioni pubblicitarie\Riscaldatore indotto_3.mph</li>
          <li>[20 feb 2023, 12:54] Alcune entità geometriche sono mancanti.</li>
          <li>[20 feb 2023, 12:58] File aperto: \\192.168.30.101\Progetti in corso\TOSCOTEC\PROGETTO DESIGN YANKEE\6_SIMULAZIONI\Simulazioni Comsol\Esercizi di apprendimento\Mod</li>
          <li>[20 feb 2023, 12:59] File aperto: \\192.168.30.101\Share\Simulazioni pubblicitarie\Riscaldatore indotto_3.mph</li>
          <li>[20 feb 2023, 12:59] Alcune entità geometriche sono mancanti.</li>
        </ol>
        <div class="vbar"><svg viewBox="0 0 16 16"><path d="M5 10l3-4 3 4" fill="none" stroke="#c5c5c8"/></svg><i></i><svg viewBox="0 0 16 16"><path d="M5 6l3 4 3-4" fill="none" stroke="#c5c5c8"/></svg></div>
        <div class="hbar"><svg viewBox="0 0 16 16"><path d="M10 4L6 8l4 4" fill="none" stroke="#c5c5c8"/></svg><i></i><svg viewBox="0 0 16 16"><path d="M6 4l4 4-4 4" fill="none" stroke="#c5c5c8"/></svg></div>
      </div>
    </section>
  </div>
</main>

<div class="status">2.12 GB | 2 GB</div>

<footer class="taskbar">
  <div class="weather"><svg><use href="#weather"/></svg><div>11°C<br><span>Preval. nuvol.</span></div></div>
  <div class="apps">
    <button aria-label="Start"><svg><use href="#win"/></svg></button>
    <button class="search"><svg viewBox="0 0 16 16"><circle cx="6.500" cy="6.500" r="4.500" fill="none" stroke="#222" stroke-width="1.400"/><path d="M10 10l4.500 4.500" stroke="#222" stroke-width="1.600"/></svg>Cerca</button>
    <button aria-label="Attività"><svg><use href="#taskview"/></svg></button>
    <button aria-label="Chat"><svg><use href="#chat"/></svg></button>
    <button class="run" aria-label="Edge"><svg><use href="#edge"/></svg></button>
    <button class="run" aria-label="Esplora file"><svg><use href="#folder"/></svg></button>
    <button aria-label="Posta"><svg><use href="#mail"/></svg></button>
    <button class="run" aria-label="Outlook"><svg><use href="#outlook"/></svg></button>
    <button class="run" aria-label="Word"><svg><use href="#word"/></svg></button>
    <button class="run cur" aria-label="COMSOL"><svg><use href="#logo"/></svg></button>
  </div>
  <div class="tray"><svg><use href="#chev"/></svg><svg><use href="#cloudx"/></svg><svg><use href="#net"/></svg><svg><use href="#spk"/></svg><time>12:59<br>20/02/2023</time></div>
</footer>
<script src="scene.js"></script>
</body>
</html>
```

FILE: styles.css
```css
* { box-sizing: border-box; }
body { margin: 0; min-height: 100vh; display: flex; flex-direction: column; background: #fafbff; font: 11px/14px "Noto Sans", "Open Sans", sans-serif; color: #111; overflow-x: hidden; }
h1, h2, h3, h4, p, ul, ol, dl, dd { margin: 0; padding: 0; font: inherit; }
ul, ol { list-style: none; }
button { font: inherit; color: inherit; border: 0; background: none; padding: 0; white-space: nowrap; }
svg { display: block; flex: none; }
.defs { position: absolute; width: 0; height: 0; }

.caret { display: inline-block; flex: none; vertical-align: middle; border: 2px solid transparent; border-top: 3px solid currentColor; border-bottom: 0; margin-left: 2px; }
.caret.wide { border-width: 4px; border-top-width: 4px; border-bottom: 0; margin: 0; }

/* title bar */
.titlebar { display: grid; grid-template-columns: 1fr auto 1fr; align-items: center; height: 22px; background: linear-gradient(#fff 19px, #fafbff 19px); padding-bottom: 6px; }
.quick { display: flex; align-items: center; }
.quick svg { width: 18px; height: 18px; margin: 0 3px; }
.quick .applogo { width: 14px; height: 14px; margin: 0 8px 0 2px; }
.qsep { width: 1px; height: 14px; background: #bbb; margin: 0 3px 0 2px; }
.quick .caret { border-width: 3px; border-top-width: 4px; border-bottom: 0; margin: 0 8px 0 2px; }
.titlebar h1 { padding-left: 119px; }
.wincontrols { justify-self: end; display: flex; gap: 33px; padding-right: 19px; }
.wincontrols svg { width: 12px; height: 12px; }

/* ribbon tabs */
.tabs { display: flex; height: 24px; background: #ebecee; margin: 0 3px; }
.tabs button { padding: 0 9px; height: 24px; }
.tabs .file { background: #358dce; color: #fff; width: 56px; }
.tabs .on { background: #fafbff; color: #358dce; padding: 0 10px; margin-right: 1px; }
.tabs button.help { margin: 2px 3px 0 auto; width: 16px; height: 17px; padding: 0; background: #358dce; color: #fff; font-size: 12px; }

.ribbon { display: flex; height: 91px; margin: 0 3px 4px; border: solid #d3d5da; border-width: 0 1px 1px; padding-top: 8px; }
.group { display: flex; flex-direction: column; justify-content: space-between; border-right: 1px solid #d5d6da; height: 77px; flex: none; }
.group h2 { text-align: center; color: #6e6e71; line-height: 10px; }
.g-area { width: 139px; } .g-model { width: 176px; } .g-def { width: 200px; } .g-geom { width: 151px; } .g-mat { width: 88px; }
.g-phys { width: 140px; } .g-mesh { width: 117px; } .g-study { width: 167px; } .g-res { width: 306px; } .g-lay { width: 127px; }
.cmds { display: flex; justify-content: center; }
.cmds.start { justify-content: flex-start; padding-left: 6px; }
.big { display: flex; flex-direction: column; align-items: center; padding: 0 4px; gap: 2px; text-align: center; }
.big svg { width: 29px; height: 29px; }
.g-mesh .big + .big { margin-left: 4px; }
.big:disabled, .small button:disabled { color: #a9a9ac; }
.pi { height: 29px; font: 22px/26px "Noto Sans", sans-serif; color: #358dce; }
.pi sub { font-size: 16px; vertical-align: -5px; line-height: 0; }
.small { display: flex; flex-direction: column; gap: 2px; margin: -5px 0 0 4px; }
.g-geom .small { margin-left: 6px; }
.small button { display: flex; align-items: center; height: 20px; }
.small svg { width: 16px; height: 16px; margin-right: 3px; }
.small .caret { margin-left: 5px; }
.gl { width: 17px; font: 14px/20px "Noto Sans", sans-serif; color: #358dce; }
.gl.fx { font-size: 11px; }
.gl sub { font-size: 10px; line-height: 0; }
button:disabled .gl { color: #9cc6e8; }

/* work area */
.work { flex: 1; display: grid; grid-template-columns: 419fr 533fr 953fr; gap: 5px; margin: 0 3px; }
.panel { border: 1px solid #d0d2d8; min-width: 0; }
.head { display: flex; justify-content: space-between; height: 33px; padding: 5px 2px 0 7px; }
.head h2 { font-size: 19px; line-height: 26px; font-weight: 300; color: #2b579a; }
.tools { display: flex; align-items: center; gap: 4px; color: #4a4a4d; height: 26px; }
.tools svg { width: 12px; height: 12px; }

.builder { display: flex; flex-direction: column; padding-bottom: 8px; }
.treebar { display: flex; height: 22px; padding-left: 6px; }
.treebar button { width: 23px; height: 18px; display: flex; align-items: center; }
.treebar svg { width: 18px; height: 18px; }
.treebar .dd { width: 41px; }
.treebar .dd .caret { margin-left: 4px; }
.tree { flex: 1; margin: 0 4px; border: 1px solid #d0d2d8; background: #fff; }
.tree li { display: flex; align-items: center; height: 18px; }
.tree li svg, .tpi { width: 16px; height: 16px; margin-right: 6px; flex: none; }
.tpi { font: 12px/16px "Noto Sans", sans-serif; color: #358dce; text-align: center; }
.tpi sub { font-size: 9px; line-height: 0; }
.tree em { margin-left: 6px; }
.tree li::before { content: ""; width: 8px; height: 8px; margin-right: 7px; flex: none; }
.tree .openn::before { background: linear-gradient(135deg, transparent 50%, #3c3c3f 50%); width: 7px; height: 7px; margin-right: 8px; }
.tree .shut::before { height: 9px; background: #8b8b8e; clip-path: polygon(15% 0, 90% 50%, 15% 100%, 15% 0, 28% 24%, 28% 76%, 64% 50%, 28% 24%); }
.l0 { padding-left: 5px; } .l1 { padding-left: 25px; } .l2 { padding-left: 45px; } .l3 { padding-left: 65px; } .l4 { padding-left: 85px; }
.sel { background: #dadadd; }

.settings h3 { font-size: 14px; line-height: 18px; color: #2b579a; font-weight: 300; padding: 3px 6px 0; }
.field { display: flex; align-items: center; margin: 11px 5px 10px; }
.field label { width: 59px; }
.field input { flex: 1; height: 18px; min-width: 0; border: 1px solid #d0d2d8; background: #fff; padding: 0 2px; font: inherit; color: inherit; margin-right: 8px; }
.btn { border: 1px solid #cfcfd2; border-radius: 2px; background: linear-gradient(#f3f3f4, #e9e9ea); height: 19px; padding: 0 13px; }
.btn:disabled { color: #8b8b8e; border-color: #e0e0e3; background: #f1f1f3; }
.goto { width: 20px; height: 22px; padding: 0 1px; }
.goto svg { width: 16px; height: 16px; }
.sect { display: flex; align-items: center; gap: 13px; height: 26px; padding-left: 5px; background: #dde8f5; font-size: 12px; }
.sect .caret { color: #4a4a4d; }
.info { padding: 9px 3px 0; }
.info p { padding-left: 4px; }
.info dl { display: flex; margin: 28px 0 7px; padding-left: 2px; }
.info dt { width: 151px; }
.btns { display: flex; gap: 7px; margin-bottom: 2px; }

.rightcol { display: flex; flex-direction: column; gap: 6px; min-width: 0; }
.graphics { flex: 1; border-color: #99d1f7; background: linear-gradient(#fafbff 0, #fafbff 15%, #e3f0ff 100%); }
.graphics .head { height: 31px; }
.graphics .head h2 { color: #2b8fe0; }
.graphics .tools { color: #358dce; }
.gbar { display: flex; align-items: center; height: 21px; padding-left: 3px; }
.gbar button { width: 23px; height: 20px; display: flex; align-items: center; justify-content: center; }
.gbar svg { width: 17px; height: 17px; }
.dda { width: 17px; flex: none; }
.dda::before { content: ""; display: block; width: 0; border: 4px solid transparent; border-top-color: #111; border-bottom: 0; margin-left: 3px; }
.dda.dim::before { border-top-color: #777; }
.gsep { width: 1px; height: 16px; margin: 0 4px; background: #d0d2d8; }
.gbar .act { width: 20px; margin: 0 2px 0 1px; background: #99d1fb; border: 1px solid #2f95e8; border-radius: 2px; }
.gbar .combo { width: 38px; margin: 0 3px 0 0; padding-left: 1px; justify-content: space-around; background: linear-gradient(90deg, #99d1fb 19px, #2f95e8 19px, #2f95e8 20px, #99d1fb 20px); }
.gbar.second { height: 21px; }
.scene { width: 100%; height: auto; }
.grid path { fill: none; stroke: #858589; }
.edge { fill: none; stroke: #111; stroke-width: 2; }
.features path, .features circle { fill: none; stroke: #0a0a0a; stroke-width: 1.4; }
.features .thick { stroke-width: 4; stroke: #141414; }
.shine { fill: none; stroke: #d2d2d2; stroke-width: 4; opacity: .55; }
.face path { fill: #b9b9b9; stroke: #111; stroke-width: 1.3; }
.face .in { fill: #9b9da0; stroke-width: 2; }
.face .fl { fill: none; stroke: #333; stroke-width: .6; }
.labels text { font: 12px "DejaVu Sans", sans-serif; text-anchor: middle; fill: #111; }
.triad path { stroke-width: 2; }
.tube-o { fill: none; stroke: #000; stroke-width: 5; }
.tube-i { fill: none; stroke: #8a8a8a; stroke-width: 1.5; stroke-dasharray: 16 1 9 1; }

.messages { height: 170px; display: flex; flex-direction: column; font-size: 12px; }
.mtabs { display: flex; align-items: flex-start; gap: 8px; height: 30px; padding: 5px 0 0 4px; border-bottom: 1px solid #d0d2d8; }
.mtabs button { height: 22px; padding: 0 4px; background: #ebebec; }
.mtabs .on { width: 87px; height: 25px; background: #fafbff; color: #2b579a; border: 1px solid #d0d2d8; border-bottom: 0; text-align: left; }
.mtabs .x { color: #b5b5b8; margin-left: 4px; }
.mtabs .tools { margin-left: auto; height: 24px; padding-right: 2px; }
.mbar { display: flex; height: 26px; padding: 3px 4px; gap: 4px; }
.mbar button { width: 20px; height: 20px; display: flex; align-items: center; justify-content: center; }
.mbar svg { width: 16px; height: 16px; }
.mbar .act { background: #99d1fb; border: 1px solid #2f95e8; border-radius: 2px; }
.log { flex: 1; display: grid; grid-template: minmax(0, 1fr) 17px / minmax(0, 1fr) 17px; margin: 0 4px 4px; border: 1px solid #d0d2d8; font-size: 11px; line-height: 15px; }
.log ol { overflow: hidden; white-space: nowrap; padding-left: 2px; }
.vbar { display: flex; flex-direction: column; align-items: center; background: #f7f7f8; }
.vbar svg, .hbar svg { width: 16px; height: 16px; }
.vbar i { width: 17px; height: 36px; margin-top: auto; background: #e3e4e6; }
.hbar { display: flex; align-items: center; background: #fcfdff; }
.hbar i { height: 17px; flex: 0 0 62.5%; margin-right: auto; background: #e3e4e6; }
.status { height: 31px; padding: 10px 0 0 1241px; line-height: 18px; white-space: nowrap; }

/* taskbar */
.taskbar { display: grid; grid-template-columns: 1fr auto 1fr; align-items: center; height: 48px; border-top: 1px solid #b3b3b5; background: linear-gradient(90deg, #d9d9d9 26%, #ecdccf 30%, #ecdccf 40%, #f4e6cd 44%, #ecdccf 50%, #ecdccf 70%, #d9d9d9 74%); }
.weather { display: flex; align-items: center; gap: 5px; padding-left: 15px; line-height: 16px; }
.weather svg { width: 30px; height: 30px; }
.weather span { color: #5c5c5e; }
.apps { display: flex; align-items: center; gap: 6px; }
.apps button { position: relative; width: 38px; height: 38px; display: flex; align-items: center; justify-content: center; }
.apps svg { width: 26px; height: 26px; }
.apps .search { width: 98px; height: 30px; border-radius: 15px; background: #faf6f0; gap: 6px; margin: 0 1px; }
.apps .search svg { width: 14px; height: 14px; }
.apps .run::after { content: ""; position: absolute; bottom: 0; width: 6px; height: 3px; border-radius: 2px; background: #85807b; }
.apps .cur { background: #f7efe8; border-radius: 4px; }
.apps .cur svg { width: 22px; height: 22px; }
.apps .cur::after { width: 16px; background: #0a78d4; }
.tray { justify-self: end; display: flex; align-items: center; gap: 8px; padding-right: 15px; }
.tray svg { width: 18px; height: 18px; }
.tray time { text-align: right; line-height: 16px; margin-left: 10px; }
```

FILE: scene.js
```js
// Builds the coil and the triangulated heater body inside the graphics window.
(function () {
  var NS = "http://www.w3.org/2000/svg";
  var seed = 7;
  function rnd() { seed = (seed * 16807) % 2147483647; return seed / 2147483647; }
  function add(parent, d, attrs) {
    var p = document.createElementNS(NS, "path");
    p.setAttribute("d", d);
    Object.keys(attrs).forEach(function (k) { p.setAttribute(k, attrs[k]); });
    parent.appendChild(p);
  }

  // helix position after t turns
  function coil(t) {
    var b = 101.4 - 0.15 * t, a = 62.9 - 0.1 * t;
    return [
      1217.8 + 23.9 * t + a * Math.cos(2 * Math.PI * (t - 0.338)),
      591.8 - 9.9 * t - b * Math.cos(2 * Math.PI * t)
    ];
  }
  function arc(from, to) {
    var d = "";
    for (var i = 0; i <= 30; i++) {
      var p = coil(from + (to - from) * i / 30);
      d += (i ? "L" : "M") + p[0].toFixed(1) + " " + p[1].toFixed(1);
    }
    return d;
  }
  function tube(id, from, to) {
    var g = document.getElementById(id), d = arc(from, to);
    add(g, d, { "class": "tube-o" });
    add(g, d, { "class": "tube-i" });
  }
  for (var n = 19; n >= 0; n--) {
    if (n === 19) { tube("coilBack", 19.48, 19.6); } else { tube("coilBack", n + 0.48, n + 1.02); }
  }
  tube("coilBack", -0.42, 0.02);
  for (n = 19; n >= 0; n--) { tube("coilFront", n - 0.02, n + 0.5); }

  // body mesh, drawn along the heater axis
  var host = document.getElementById("bodyMesh");
  add(host, "M1150 340H1780V650H1150z", { fill: "url(#body)" });
  var g = document.createElementNS(NS, "g");
  g.setAttribute("transform", "translate(1177 609) rotate(-21.8)");
  host.appendChild(g);
  add(g, "M-20 -60H60V60H-20z", { fill: "#a2a2a2" });
  add(g, "M60 -90H125V90H60z", { fill: "#868686" });
  add(g, "M570 -60H650V60H570z", { fill: "#858585" });
  add(g, "M480 -90H570V90H480z", { fill: "#5e5e5e" });

  for (var i = 0; i < 420; i++) {
    var x = 110 + rnd() * 370, y = -62 + rnd() * 124, s = Math.round(40 + rnd() * 95);
    add(g, "M" + x.toFixed(0) + " " + y.toFixed(1) + "h" + (15 + rnd() * 50).toFixed(0),
      { stroke: "rgb(" + s + "," + s + "," + s + ")", "stroke-width": "1.5" });
  }
  function mesh(x0, x1, step, width) {
    var cols = Math.ceil((x1 - x0) / step), rows = Math.ceil(170 / step), pts = [], d = "";
    for (var r = 0; r <= rows; r++) {
      pts.push([]);
      for (var c = 0; c <= cols; c++) {
        pts[r].push((x0 + c * step + (rnd() - 0.5) * step * 0.8).toFixed(1) + " " +
          (-85 + r * step + (rnd() - 0.5) * step * 0.8).toFixed(1));
      }
    }
    for (r = 0; r < rows; r++) {
      for (c = 0; c < cols; c++) {
        d += "M" + pts[r][c + 1] + "L" + pts[r][c] + "L" + pts[r + 1][c];
        d += rnd() > 0.5 ? "M" + pts[r][c] + "L" + pts[r + 1][c + 1] : "M" + pts[r][c + 1] + "L" + pts[r + 1][c];
      }
    }
    add(g, d, { fill: "none", stroke: "#0c0c0c", "stroke-width": width });
  }
  mesh(-20, 60, 9, "0.5");
  mesh(50, 150, 5, "0.4");
  mesh(150, 480, 13, "0.4");
  mesh(475, 580, 4, "0.4");
  mesh(570, 645, 6, "0.5");
})();
```
